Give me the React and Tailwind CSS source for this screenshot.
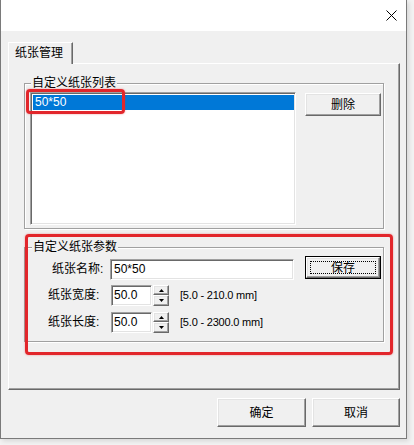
import React from "react";

const raised =
  "border border-t-white border-l-white border-r-[#696969] border-b-[#696969] shadow-[inset_-1px_-1px_0_#a0a0a0,inset_1px_1px_0_#e3e3e3] bg-[#f0f0f0]";
const sunken =
  "border border-t-[#a0a0a0] border-l-[#a0a0a0] border-r-white border-b-white shadow-[inset_1px_1px_0_#696969,inset_-1px_-1px_0_#e3e3e3] bg-white";

function Button({ children, className = "" }) {
  return (
    <div className={`${raised} flex items-center justify-center leading-none ${className}`}>
      <span className="text-[12px] leading-[14px]">{children}</span>
    </div>
  );
}

function GroupBox({ label, labelLeft, className = "", children }) {
  return (
    <div
      className={`relative border border-[#a0a0a0] shadow-[1px_1px_0_#ffffff,inset_1px_1px_0_#ffffff] ${className}`}
    >
      <span
        className={`absolute top-[-8px] ${labelLeft} px-[1px] bg-[#f0f0f0] text-[12px] leading-[14px] whitespace-nowrap`}
      >
        {label}
      </span>
      {children}
    </div>
  );
}

function Spin() {
  return (
    <div className="flex flex-col w-[16px] h-[21px] ml-[1px]">
      <div className={`${raised} h-[10px] flex items-center justify-center`}>
        <svg width="5" height="3" viewBox="0 0 5 3">
          <path d="M2.5 0 L5 3 L0 3 Z" fill="#000" />
        </svg>
      </div>
      <div className={`${raised} h-[11px] flex items-center justify-center`}>
        <svg width="5" height="3" viewBox="0 0 5 3">
          <path d="M0 0 L5 0 L2.5 3 Z" fill="#000" />
        </svg>
      </div>
    </div>
  );
}

export default function App() {
  return (
    <div className="relative w-[414px] h-[445px] overflow-hidden bg-[#f3f3f3] text-black font-['Liberation_Sans','Noto_Sans_CJK_SC',sans-serif]">
      <div className="w-[407px] h-[439px] flex flex-col border-l border-r border-b border-[#7a7a7a] bg-[#f0f0f0] shadow-[2px_2px_5px_rgba(0,0,0,0.12)]">
        {/* title bar */}
        <div className="h-[31px] bg-white flex justify-end items-start pr-[9px] pt-[10px] shrink-0">
          <svg width="11" height="11" viewBox="0 0 11 11">
            <path d="M0.5 0.5 L10.5 10.5 M10.5 0.5 L0.5 10.5" stroke="#000" strokeWidth="1" />
          </svg>
        </div>

        {/* body */}
        <div className="flex flex-col pl-[7px] pr-[6px] pt-[11px]">
          {/* tab strip */}
          <div className="h-[21px] flex">
            <div className="relative z-10 h-[22px] -mb-[1px] w-[65px] bg-[#f0f0f0] border-t border-l border-white border-r border-r-[#696969] shadow-[inset_-1px_0_0_#a0a0a0] pl-[6px] flex items-center">
              <span className="text-[12px] leading-[14px] pb-[1px]">纸张管理</span>
            </div>
          </div>

          {/* tab panel */}
          <div className="h-[327px] border border-t-white border-l-white border-r-[#696969] border-b-[#696969] shadow-[inset_-1px_-1px_0_#a0a0a0] pl-[15px] pt-[19px] flex flex-col">
            {/* group 1 */}
            <GroupBox label="自定义纸张列表" labelLeft="left-[6px]" className="w-[360px] h-[146px]">
              <div className="flex items-start pl-[5px] pt-[8px]">
                <div className={`${sunken} w-[266px] h-[133px] p-[1px]`}>
                  <div className="h-[15px] bg-[#0078d7] text-white text-[12px] leading-[15px] pl-[2px] ml-[1px] mt-[1px]">
                    50*50
                  </div>
                </div>
                <Button className="w-[76px] h-[23px] ml-[9px] mt-[1px]">删除</Button>
              </div>
            </GroupBox>

            {/* group 2 */}
            <GroupBox label="自定义纸张参数" labelLeft="left-[7px]" className="w-[360px] h-[95px] mt-[18px]">
              <div className="flex flex-col pt-[8px]">
                {/* row 1 */}
                <div className="flex items-start h-[23px]">
                  <div className="w-[85px] pl-[27px] mt-[3px] text-[12px] leading-[21px] whitespace-nowrap">
                    纸张名称:
                  </div>
                  <div className={`${sunken} w-[184px] h-[21px] mt-[3px] pl-[3px] text-[12px] leading-[19px]`}>
                    50*50
                  </div>
                  <div className="w-[76px] h-[23px] ml-[11px] border border-black">
                    <div className={`${raised} relative w-full h-full flex items-center justify-center`}>
                      <span className="text-[12px] leading-[14px]">保存</span>
                      <div className="absolute inset-[3px] border border-dotted border-black"></div>
                    </div>
                  </div>
                </div>

                {/* row 2 */}
                <div className="flex items-center h-[21px] mt-[6px]">
                  <div className="w-[86px] pl-[23px] text-[12px] leading-[21px] whitespace-nowrap">纸张宽度:</div>
                  <div className={`${sunken} w-[41px] h-[21px] pl-[2px] text-[12px] leading-[18px]`}>50.0</div>
                  <Spin />
                  <div className="ml-[11px] text-[11px] tracking-[-0.2px] leading-[21px] whitespace-nowrap">
                    [5.0 - 210.0 mm]
                  </div>
                </div>

                {/* row 3 */}
                <div className="flex items-center h-[21px] mt-[6px]">
                  <div className="w-[86px] pl-[23px] text-[12px] leading-[21px] whitespace-nowrap">纸张长度:</div>
                  <div className={`${sunken} w-[41px] h-[21px] pl-[2px] text-[12px] leading-[18px]`}>50.0</div>
                  <Spin />
                  <div className="ml-[11px] text-[11px] tracking-[-0.2px] leading-[21px] whitespace-nowrap">
                    [5.0 - 2300.0 mm]
                  </div>
                </div>
              </div>
            </GroupBox>
          </div>

          {/* dialog buttons */}
          <div className="flex justify-end gap-[6px] mt-[8px]">
            <Button className="w-[89px] h-[29px]">确定</Button>
            <Button className="w-[88px] h-[29px]">取消</Button>
          </div>
        </div>
      </div>

      {/* red annotation rectangles */}
      <div className="absolute left-[26px] top-[89px] w-[99px] h-[25px] border-[3px] border-[#e2262b] rounded-[4px] shadow-[0_0_2px_rgba(226,38,43,0.5)]"></div>
      <div className="absolute left-[25px] top-[234px] w-[368px] h-[121px] border-[3px] border-[#e2262b] rounded-[4px] shadow-[0_0_2px_rgba(226,38,43,0.5)]"></div>
    </div>
  );
}
